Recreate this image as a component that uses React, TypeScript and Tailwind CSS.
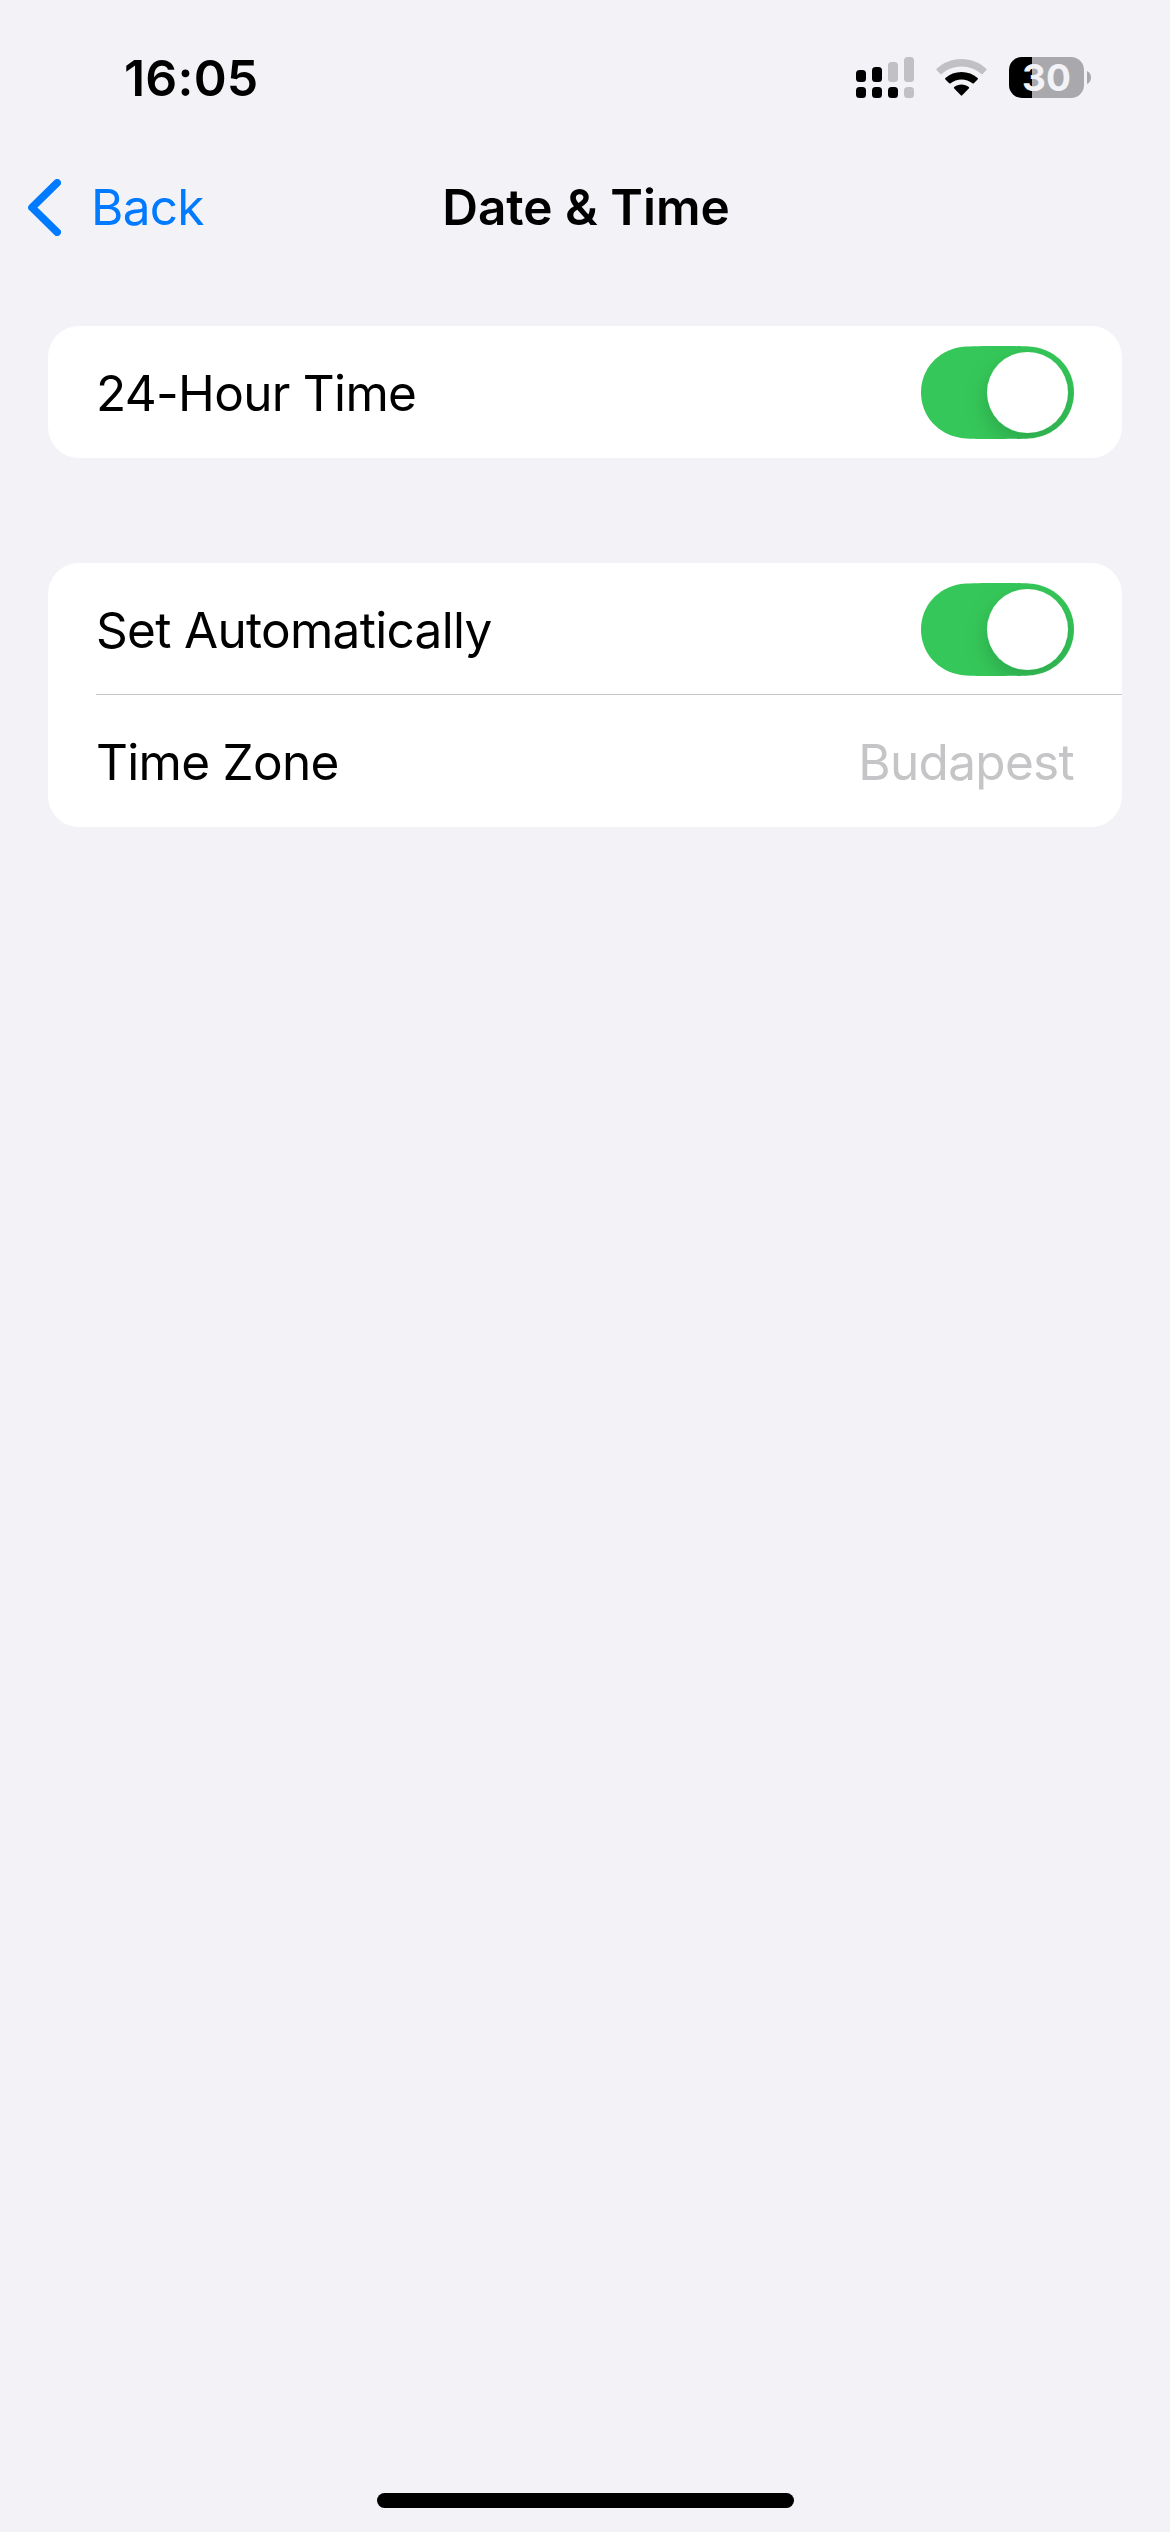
import { useId, useState } from "react";

interface ToggleProps {
    label: string;
    checked: boolean;
    onChange: (value: boolean) => void;
}

function Toggle({ label, checked, onChange }: ToggleProps) {
    const id = useId();
    const track =
        "M76.5 0C98 0 107 .3 113 1.1C136 4.5 153 23 153 46.5C153 70 136 88.5 113 91.9C107 92.7 98 93 76.5 93C55 93 46 92.7 40 91.9C17 88.5 0 70 0 46.5C0 23 17 4.5 40 1.1C46 .3 55 0 76.5 0Z";

    return (
        <button role="switch" aria-checked={checked} aria-label={label} onClick={() => onChange(!checked)}>
            <svg className="block" width="153" height="93" viewBox="0 0 153 93">
                <defs>
                    <clipPath id={`${id}-clip`}>
                        <path d={track} />
                    </clipPath>
                    <filter id={`${id}-shadow`} x="-50%" y="-50%" width="200%" height="200%">
                        <feDropShadow dx="0" dy="9" stdDeviation="11" floodColor="#000" floodOpacity="0.17" />
                    </filter>
                </defs>
                <path d={track} fill={checked ? "#35c759" : "#e9e9ea"} />
                <g clipPath={`url(#${id}-clip)`}>
                    <circle cx={checked ? 106.5 : 46.5} cy="46.5" r="40.5" fill="#fff" filter={`url(#${id}-shadow)`} />
                </g>
            </svg>
        </button>
    );
}

function SignalIcon() {
    return (
        <svg width="58" height="41" viewBox="0 0 58 41">
            <g fill="#000">
                <rect x="0" y="13" width="10" height="12" rx="3.5" />
                <rect x="16" y="10" width="10" height="15" rx="3.5" />
                <rect x="0" y="30" width="10" height="11" rx="3.5" />
                <rect x="16" y="30" width="10" height="11" rx="3.5" />
                <rect x="32" y="30" width="10" height="11" rx="3.5" />
            </g>
            <g fill="#c1c0c5">
                <rect x="32" y="5" width="10" height="20" rx="3.5" />
                <rect x="48" y="0" width="10" height="25" rx="3.5" />
                <rect x="48" y="30" width="10" height="11" rx="3.5" />
            </g>
        </svg>
    );
}

function WifiIcon() {
    return (
        <svg width="51" height="37" viewBox="0 0 51 37">
            <path
                d="M25.5 0C35.3 0 44.2 3.8 50.3 9.8Q51 10.5 50.3 11.3L46.6 15Q45.9 15.6 45.2 15C40 10.3 33.1 7.5 25.5 7.5C17.9 7.5 11 10.3 5.8 15Q5.1 15.6 4.4 15L.7 11.3Q0 10.5 .7 9.8C6.8 3.8 15.7 0 25.5 0Z"
                fill="#c1c0c5"
            />
            <path
                d="M25.5 13C31.7 13 37.3 15.3 41.6 19Q42.3 19.7 41.6 20.4L37.8 24.2Q37.1 24.8 36.4 24.2C33.4 21.8 29.6 20.4 25.5 20.4C21.4 20.4 17.6 21.8 14.6 24.2Q13.9 24.8 13.2 24.2L9.4 20.4Q8.7 19.7 9.4 19C13.7 15.3 19.3 13 25.5 13Z"
                fill="#000"
            />
            <path
                d="M25.5 25.4C28.3 25.4 30.8 26.4 32.8 28Q33.5 28.7 32.8 29.4L26.2 36.3Q25.5 37 24.8 36.3L18.2 29.4Q17.5 28.7 18.2 28C20.2 26.4 22.7 25.4 25.5 25.4Z"
                fill="#000"
            />
        </svg>
    );
}

function Battery({ level }: { level: number }) {
    const fill = `${level + 0.7}%`;

    return (
        <div className="flex items-center gap-[3px]">
            <div
                className="flex h-[41px] w-[75px] items-center justify-center rounded-[13px]"
                style={{ background: `linear-gradient(to right, #000 ${fill}, #a9a8ad ${fill})` }}
            >
                <span className="text-[37px] leading-[41px] font-bold text-[#f2f2f7]">{level}</span>
            </div>
            <svg width="4" height="13" viewBox="0 0 4 13">
                <path d="M0 0C2.4 1 4 3.5 4 6.5S2.4 12 0 13Z" fill="#a9a8ad" />
            </svg>
        </div>
    );
}

function StatusBar() {
    return (
        <div className="flex h-[141px] items-start justify-between pr-[79px] pl-[124px]">
            <span className="mt-[48px] text-[50px] leading-[60px] font-semibold tracking-[0.2px]">16:05</span>
            <div className="mt-[57px] flex items-center gap-[22px]">
                <SignalIcon />
                <WifiIcon />
                <Battery level={30} />
            </div>
        </div>
    );
}

function NavBar() {
    return (
        <div className="grid h-[132px] grid-cols-[1fr_auto_1fr] items-center">
            <button className="flex items-center gap-[30px] pl-[28px] text-[#007aff]">
                <svg width="33" height="57" viewBox="0 0 33 57" fill="none">
                    <path d="M29.2 3.8L4 28.5L29.2 53.2" stroke="currentColor" strokeWidth="7.6" strokeLinecap="round" strokeLinejoin="round" />
                </svg>
                <span className="text-[49.5px] leading-[60px] tracking-[-0.7px]">Back</span>
            </button>
            <h1 className="pl-[2px] text-[49.5px] leading-[60px] font-semibold">Date &amp; Time</h1>
        </div>
    );
}

function Card({ children }: { children: React.ReactNode }) {
    return <section className="overflow-hidden rounded-[31px] bg-white pl-12">{children}</section>;
}

function Row({ label, divider, children }: { label: string; divider?: boolean; children: React.ReactNode }) {
    return (
        <div className="relative flex h-[132px] items-center justify-between pr-12">
            <span className="pt-[2px]">{label}</span>
            {children}
            {divider && <div className="absolute right-0 bottom-0 left-0 h-px bg-[#c6c6c8]" />}
        </div>
    );
}

export default function App() {
    const [use24Hour, setUse24Hour] = useState(true);
    const [automatic, setAutomatic] = useState(true);

    return (
        <div className="flex h-[2532px] w-[1170px] flex-col bg-[#f2f2f7] font-['Inter',sans-serif] text-black">
            <StatusBar />
            <NavBar />

            <main className="mt-[53px] flex flex-1 flex-col gap-[105px] px-12 text-[49.5px] leading-[60px] tracking-[-0.7px]">
                <Card>
                    <Row label="24-Hour Time">
                        <Toggle label="24-Hour Time" checked={use24Hour} onChange={setUse24Hour} />
                    </Row>
                </Card>
                <Card>
                    <Row label="Set Automatically" divider>
                        <Toggle label="Set Automatically" checked={automatic} onChange={setAutomatic} />
                    </Row>
                    <Row label="Time Zone">
                        <span className="pt-[2px] text-[#c5c5c7]">Budapest</span>
                    </Row>
                </Card>
            </main>

            <div className="mx-auto mb-[24px] h-[15px] w-[417px] rounded-full bg-black" />
        </div>
    );
}
